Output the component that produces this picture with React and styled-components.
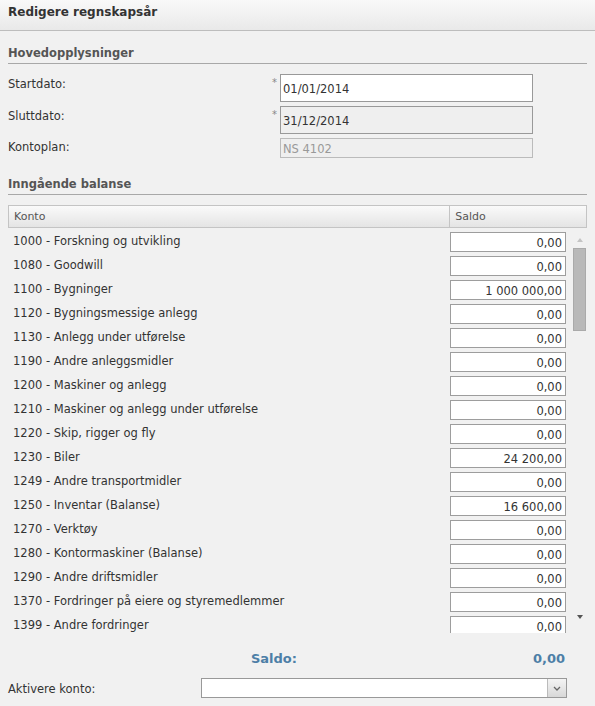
import styled, { createGlobalStyle } from 'styled-components';

const GlobalStyle = createGlobalStyle`
  body {
    margin: 0;
    background: #f1f1f1;
    font-family: "DejaVu Sans", Verdana, sans-serif;
    font-size: 11.5px;
    color: #333;
  }
`;

const Page = styled.div`
  width: 595px;
  height: 706px;
  overflow: hidden;
  background: #f1f1f1;
`;

const TitleBar = styled.div`
  height: 31px;
  box-sizing: border-box;
  padding: 5px 8px 0;
  background: linear-gradient(#f9f9f9, #e9e9e9);
  border-bottom: 1px solid #bdbdbd;
  font-weight: bold;
  font-size: 12px;
  color: #333;
`;

const Content = styled.div`
  padding: 0 8px;
`;

const SectionTitle = styled.div`
  margin-top: ${(p) => p.top}px;
  padding-bottom: 3px;
  border-bottom: 1px solid #a8a8a8;
  font-weight: bold;
  font-size: 11.5px;
  color: #555;
`;

const FormRow = styled.div`
  display: flex;
  align-items: flex-start;
  margin-top: ${(p) => p.top}px;
`;

const Label = styled.div`
  width: 264px;
  padding-top: ${(p) => p.pad}px;
`;

const Star = styled.div`
  width: 8px;
  color: #888;
  font-size: 10px;
  line-height: 1;
  padding-top: 4px;
`;

const TextBox = styled.div`
  width: 253px;
  height: ${(p) => p.h}px;
  box-sizing: border-box;
  border: 1px solid ${(p) => (p.dim ? '#bbb' : '#999')};
  background: ${(p) => (p.dis ? '#efefef' : '#fff')};
  color: ${(p) => (p.dim ? '#999' : '#333')};
  padding: ${(p) => (p.h > 22 ? 7 : 3)}px 2px 0;
  font-size: 11.5px;
`;

const Table = styled.div`
  margin-top: 10px;
`;

const Header = styled.div`
  display: flex;
  height: 23px;
  box-sizing: border-box;
  border: 1px solid #c4c4c4;
  background: linear-gradient(#fafafa, #e4e4e4);
  color: #555;
  font-size: 11px;
`;

const HeadCell = styled.div`
  width: ${(p) => p.w}px;
  padding: 4px 0 0 5px;
  box-sizing: border-box;
  border-left: ${(p) => (p.split ? '1px solid #c4c4c4' : 'none')};
`;

const BodyWrap = styled.div`
  display: flex;
  height: 405px;
  overflow: hidden;
`;

const Rows = styled.div`
  width: 558px;
`;

const Row = styled.div`
  display: flex;
  align-items: center;
  height: 24px;
  box-sizing: border-box;
  padding-top: 3px;
`;

const RowLabel = styled.div`
  width: 442px;
  padding-left: 5px;
  box-sizing: border-box;
  margin-top: -2px;
`;

const Amount = styled.div`
  width: 116px;
  height: 20px;
  box-sizing: border-box;
  border: 1px solid #9d9d9d;
  background: #fff;
  text-align: right;
  padding: 3px 3px 0 0;
`;

const Scrollbar = styled.div`
  width: 15px;
  margin-left: 6px;
  display: flex;
  flex-direction: column;
  align-items: center;
`;

const Arrow = styled.div`
  width: 0;
  height: 0;
  border-left: 3px solid transparent;
  border-right: 3px solid transparent;
  ${(p) => (p.up ? 'border-bottom: 4px solid #c4c4c4;' : 'border-top: 4px solid #555;')}
  margin: ${(p) => (p.up ? '10px 0 6px' : 'auto 0 14px')};
`;

const Thumb = styled.div`
  width: 11px;
  height: 81px;
  background: #b9b9b9;
  border: 1px solid #aaa;
`;

const SaldoRow = styled.div`
  display: flex;
  margin-top: 18px;
  color: #4d7fa7;
  font-weight: bold;
  font-size: 13px;
`;

const SaldoLabel = styled.div`
  width: 289px;
  text-align: right;
`;

const SaldoValue = styled.div`
  width: 268px;
  text-align: right;
`;

const SelectRow = styled.div`
  display: flex;
  align-items: center;
  margin-top: 12px;
`;

const SelectLabel = styled.div`
  width: 193px;
  margin-top: 1px;
`;

const Select = styled.div`
  width: 366px;
  height: 20px;
  box-sizing: border-box;
  border: 1px solid #999;
  background: #fff;
  display: flex;
  justify-content: flex-end;
`;

const SelectButton = styled.div`
  width: 18px;
  border-left: 1px solid #bbb;
  background: linear-gradient(#f4f4f4, #d8d8d8);
  display: flex;
  align-items: center;
  justify-content: center;
`;

const accounts = [
  ['1000 - Forskning og utvikling', '0,00'],
  ['1080 - Goodwill', '0,00'],
  ['1100 - Bygninger', '1 000 000,00'],
  ['1120 - Bygningsmessige anlegg', '0,00'],
  ['1130 - Anlegg under utførelse', '0,00'],
  ['1190 - Andre anleggsmidler', '0,00'],
  ['1200 - Maskiner og anlegg', '0,00'],
  ['1210 - Maskiner og anlegg under utførelse', '0,00'],
  ['1220 - Skip, rigger og fly', '0,00'],
  ['1230 - Biler', '24 200,00'],
  ['1249 - Andre transportmidler', '0,00'],
  ['1250 - Inventar (Balanse)', '16 600,00'],
  ['1270 - Verktøy', '0,00'],
  ['1280 - Kontormaskiner (Balanse)', '0,00'],
  ['1290 - Andre driftsmidler', '0,00'],
  ['1370 - Fordringer på eiere og styremedlemmer', '0,00'],
  ['1399 - Andre fordringer', '0,00'],
];

const App = () => {
  return (
    <Page>
      <GlobalStyle />
      <TitleBar>Redigere regnskapsår</TitleBar>
      <Content>
        <SectionTitle top={15}>Hovedopplysninger</SectionTitle>
        <FormRow top={10}>
          <Label pad={3}>Startdato:</Label>
          <Star>*</Star>
          <TextBox h={28}>01/01/2014</TextBox>
        </FormRow>
        <FormRow top={4}>
          <Label pad={3}>Sluttdato:</Label>
          <Star>*</Star>
          <TextBox h={28} dis>31/12/2014</TextBox>
        </FormRow>
        <FormRow top={4}>
          <Label pad={2}>Kontoplan:</Label>
          <Star />
          <TextBox h={20} dis dim>NS 4102</TextBox>
        </FormRow>
        <SectionTitle top={19}>Inngående balanse</SectionTitle>
        <Table>
          <Header>
            <HeadCell w={441}>Konto</HeadCell>
            <HeadCell w={137} split>Saldo</HeadCell>
          </Header>
          <BodyWrap>
            <Rows>
              {accounts.map(([name, amount]) => (
                <Row key={name}>
                  <RowLabel>{name}</RowLabel>
                  <Amount>{amount}</Amount>
                </Row>
              ))}
            </Rows>
            <Scrollbar>
              <Arrow up />
              <Thumb />
              <Arrow />
            </Scrollbar>
          </BodyWrap>
        </Table>
        <SaldoRow>
          <SaldoLabel>Saldo:</SaldoLabel>
          <SaldoValue>0,00</SaldoValue>
        </SaldoRow>
        <SelectRow>
          <SelectLabel>Aktivere konto:</SelectLabel>
          <Select>
            <SelectButton>
              <svg width="8" height="5" viewBox="0 0 8 5">
                <path d="M1 1l3 3 3-3" fill="none" stroke="#666" strokeWidth="1.3" />
              </svg>
            </SelectButton>
          </Select>
        </SelectRow>
      </Content>
    </Page>
  );
};

export default App;
